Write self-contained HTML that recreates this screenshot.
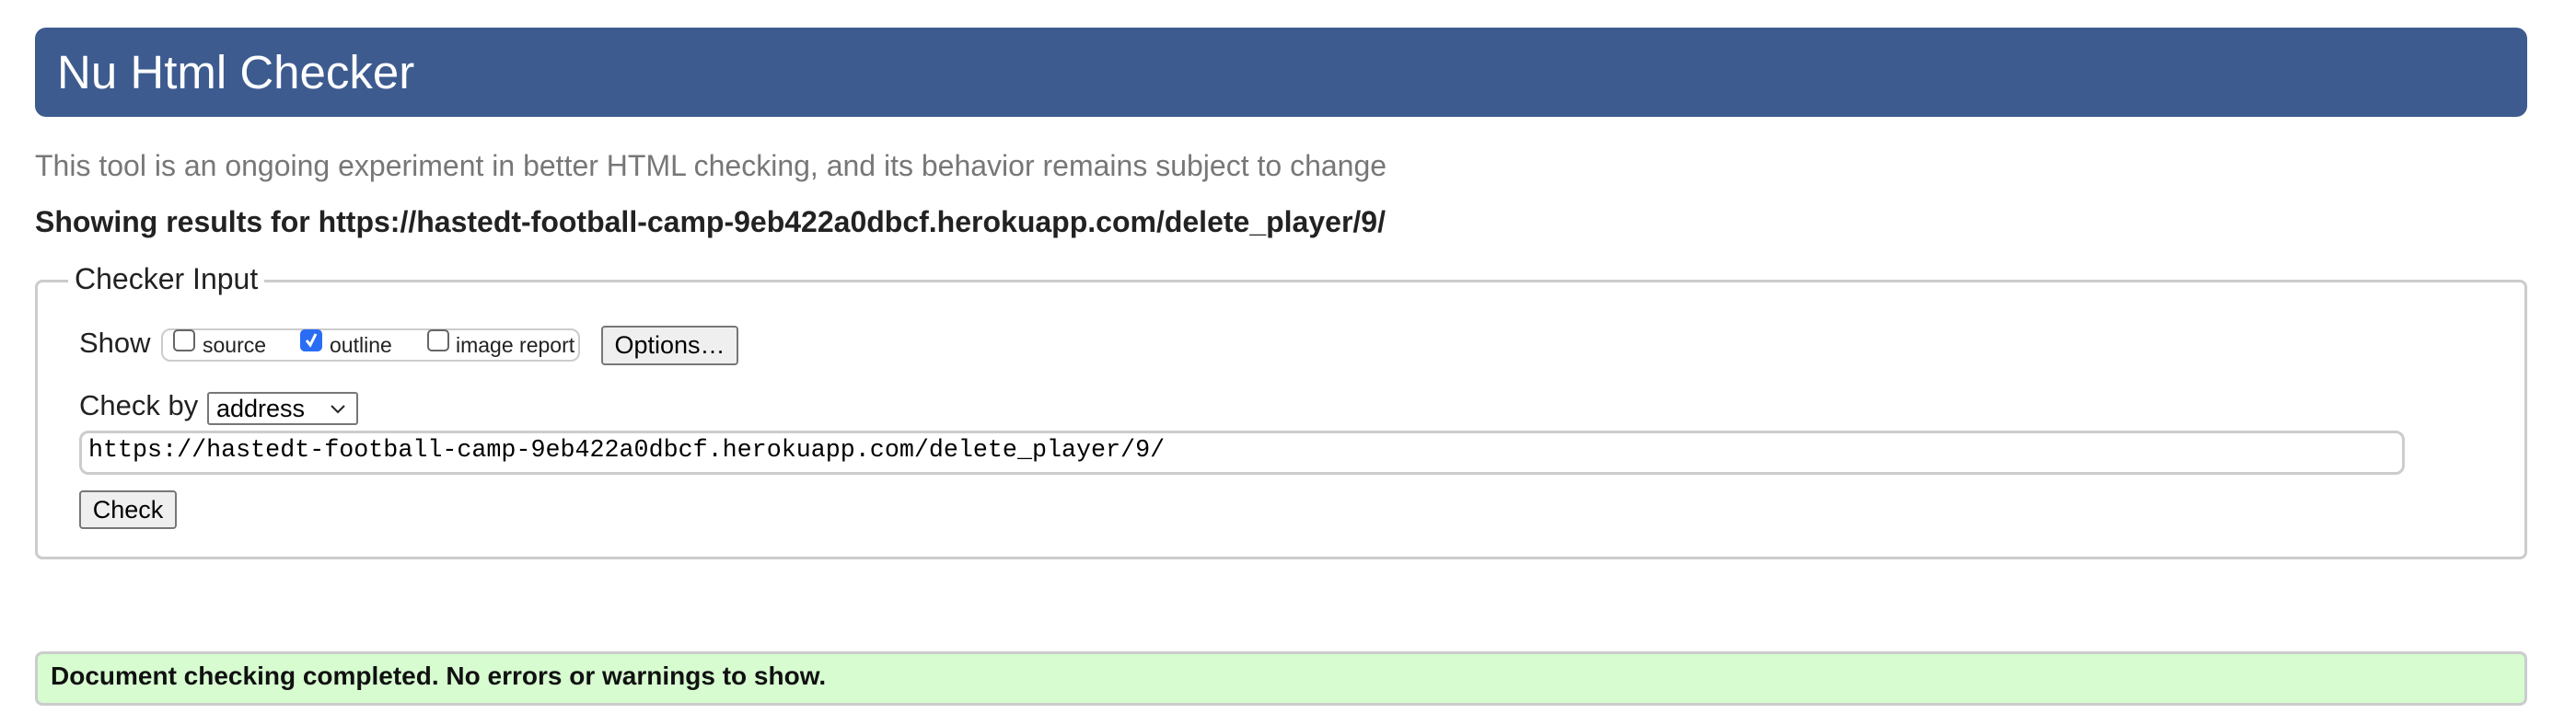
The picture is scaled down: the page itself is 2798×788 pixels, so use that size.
<!DOCTYPE html>
<html><head><meta charset="utf-8"><style>
body{margin:0;width:2798px;height:788px;background:#fff;font-family:"Liberation Sans",Arial,sans-serif;position:relative;overflow:hidden}
.a{position:absolute;white-space:nowrap}
#hdr{left:38px;top:30px;width:2707px;height:97px;background:#3d5b8f;border-radius:12px}
#hdr span{position:absolute;left:24px;top:19px;font-size:51px;color:#fff}
.box{position:absolute;border:3px solid #ccc;box-sizing:border-box;border-radius:8px}
.cb{position:absolute;width:24px;height:24px;border:2px solid #666;border-radius:5px;box-sizing:border-box;background:#fff}
.btn{position:absolute;border:2px solid #777;border-radius:4px;background:#efefef;box-sizing:border-box;font-size:27px;text-align:center;color:#000}
</style></head><body>
<div id="hdr" class="a"><span>Nu Html Checker</span></div>
<div class="a" style="left:38px;top:162px;font-size:32px;color:#777">This tool is an ongoing experiment in better HTML checking, and its behavior remains subject to change</div>
<div class="a" style="left:38px;top:223px;font-size:32px;font-weight:bold;color:#222">Showing results for https://hastedt-football-camp-9eb422a0dbcf.herokuapp.com/delete_player/9/</div>
<div class="box" style="left:38px;top:304px;width:2707px;height:304px"></div>
<div class="a" style="left:74px;top:285px;padding:0 7px;background:#fff;font-size:32px;color:#222">Checker Input</div>
<div class="a" style="left:86px;top:355px;font-size:31px;color:#222">Show</div>
<div class="box" style="left:175px;top:357px;width:455px;height:36px;border-width:2px;border-radius:10px"></div>
<div class="cb" style="left:188px;top:358px"></div>
<div class="a" style="left:220px;top:362px;font-size:23px;color:#222">source</div>
<div class="cb" style="left:326px;top:358px;background:#2a6df4;border-color:#2a6df4"><svg width="20" height="20" viewBox="0 0 20 20" style="position:absolute;left:0;top:0"><path d="M5 10 L9 15 L15 3" stroke="#fff" stroke-width="3" fill="none"/></svg></div>
<div class="a" style="left:358px;top:362px;font-size:23px;color:#222">outline</div>
<div class="cb" style="left:464px;top:358px"></div>
<div class="a" style="left:495px;top:362px;font-size:23px;color:#222">image report</div>
<div class="btn" style="left:653px;top:354px;width:149px;height:43px;line-height:38px">Options…</div>
<div class="a" style="left:86px;top:423px;font-size:31px;color:#222">Check by</div>
<div class="a" style="left:225px;top:426px;width:164px;height:36px;border:2px solid #777;border-radius:3px;box-sizing:border-box;font-size:27px;line-height:32px;padding-left:8px;color:#000">address<svg width="16" height="10" viewBox="0 0 16 10" style="position:absolute;right:12px;top:12px"><path d="M1 1 L8 8 L15 1" stroke="#222" stroke-width="2" fill="none"/></svg></div>
<div class="box" style="left:86px;top:468px;width:2526px;height:48px;border-radius:10px"></div>
<div class="a" style="left:96px;top:475px;font-family:'Liberation Mono',monospace;font-size:26.7px;color:#000">https://hastedt-football-camp-9eb422a0dbcf.herokuapp.com/delete_player/9/</div>
<div class="btn" style="left:86px;top:533px;width:106px;height:42px;line-height:38px">Check</div>
<div class="box" style="left:38px;top:708px;width:2707px;height:59px;background:#d6fcd0"></div>
<div class="a" style="left:55px;top:719px;font-size:28px;font-weight:bold;color:#111">Document checking completed. No errors or warnings to show.</div>
</body></html>
